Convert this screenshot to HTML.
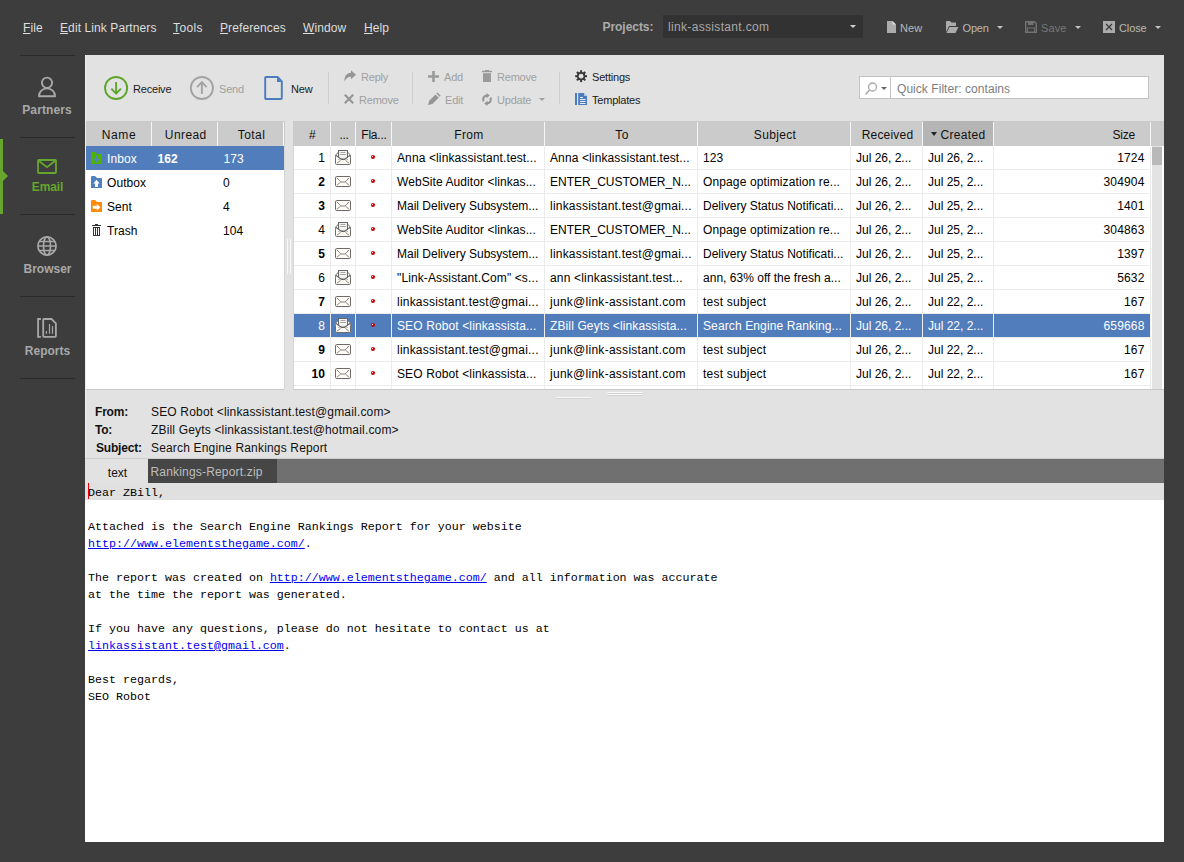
<!DOCTYPE html>
<html lang="en">
<head>
<meta charset="utf-8">
<title>LinkAssistant - Email</title>
<style>
*{box-sizing:border-box;margin:0;padding:0}
html,body{width:1184px;height:862px;overflow:hidden}
body{background:#3d3d3d;font-family:"Liberation Sans",Arial,sans-serif;font-size:12px;color:#000;position:relative;line-height:1}
.abs,.abs *{position:absolute}
span,div,i,u,svg{position:absolute;white-space:nowrap}
u{position:static}
a{color:#0000f0;text-decoration:underline}
/* top menu */
.menu span{top:21px;color:#dedede;font-size:12px;line-height:14px;letter-spacing:.1px}
.tb{color:#b9b9b9;font-size:11px;line-height:14px;top:21px;letter-spacing:.1px}
.tb.dis{color:#777}
.ar{top:26px;border:3px solid transparent;border-top:3px solid #c4c4c4;border-bottom:0;margin-left:-.5px}
/* sidebar */
.sep{left:20px;width:55px;height:1px;background:#2a2a2a}
.nav{left:0;width:95px;text-align:center;font-weight:bold;font-size:12px;color:#a8a8a8;line-height:14px;letter-spacing:0}
/* main */
#main{left:85px;top:55px;width:1079px;height:787px;background:#e2e2e2}
.tl{font-size:11px;line-height:14px;color:#1a1a1a;letter-spacing:-.2px}
.tl.dis{color:#a0a0a0}
.vsep{width:1px;height:32px;top:17px;background:#cfcfcf}
.hd{top:66px;height:25px;overflow:hidden;background:linear-gradient(#f6f6f6,#f6f6f6) right 1px/1px 100% no-repeat,#cbcbcb;font-size:12px;line-height:28px;letter-spacing:.33px;text-align:center;color:#111;padding-left:1px}
#folders{left:1px;top:91px;width:198px;height:243px;background:#fff}
#folders .f{left:0;width:198px;height:24px;overflow:hidden;font-size:12px;line-height:26px;letter-spacing:.08px}
#folders .f span{top:0}
#tbl{left:208px;top:91px;width:858px;height:243px;background:#fff;overflow:hidden}
.r{left:0;width:858px;height:24px;border-bottom:1px solid #ececec;font-size:12px;line-height:24px}
.r.sel{background:#527dbd;color:#fff}
.c{top:0;height:24px;border-right:1px solid #ececec;overflow:hidden;padding-left:5px;letter-spacing:.12px}
.sel .c{border-right-color:#eeeeee}
.c0{left:0;width:38px;text-align:right;padding-right:5px}
.c0.b{font-weight:bold}
.c1{left:38px;width:25px}
.c2{left:63px;width:36px}
.c3{left:99px;width:153px}
.c4{left:252px;width:153px}
.c5{left:405px;width:153px}
.c6{left:558px;width:72px}
.c7{left:630px;width:71px}
.c8{left:701px;width:157px;text-align:right;padding-right:5.500px;letter-spacing:.15px}
.c6,.c7{letter-spacing:0}
.env{left:4px;top:3px}
.dot{left:15px;top:9px;width:4px;height:4px;border-radius:2px;background:#c40808}
.dot:after{content:"";position:absolute;left:1px;top:1px;width:1px;height:1px;background:#ffd9d9}
.hl{font-weight:bold;font-size:12px;line-height:14px;color:#111;letter-spacing:-.2px}
.hv{font-size:12px;line-height:14px;color:#111;left:66px;letter-spacing:.17px}
pre{position:absolute;left:3px;top:430px;font-family:"Liberation Mono","Courier New",monospace;font-size:11.667px;line-height:17px;color:#000}
pre a{position:static}
</style>
</head>
<body>

<!-- top menu bar -->
<div class="menu" style="left:0;top:0;width:1184px;height:55px">
<span style="left:23px"><u>F</u>ile</span>
<span style="left:60px"><u>E</u>dit Link Partners</span>
<span style="left:173px;letter-spacing:.4px"><u>T</u>ools</span>
<span style="left:220px"><u>P</u>references</span>
<span style="left:303px"><u>W</u>indow</span>
<span style="left:364px"><u>H</u>elp</span>
</div>
<span style="left:602.500px;top:20px;font-weight:bold;font-size:12px;line-height:14px;color:#ababab;letter-spacing:-.05px">Projects:</span>
<div style="left:663px;top:15px;width:200px;height:23px;background:#323232"></div>
<span style="left:668px;top:20px;font-size:12px;line-height:14px;color:#a9a9a9;letter-spacing:.33px">link-assistant.com</span>
<i style="left:850px;top:25px;border:3px solid transparent;border-top:3px solid #d0d0d0;border-bottom:0"></i>

<svg style="left:887px;top:21px" width="9" height="12" viewBox="0 0 9 12"><path d="M0 0H5.500L9 3.500V12H0Z" fill="#ababab"/><path d="M5.500 0V3.500H9Z" fill="#dcdcdc"/></svg>
<span class="tb" style="left:900px">New</span>
<svg style="left:946px;top:21px" width="13" height="12" viewBox="0 0 13 12"><path d="M0 11V1Q0 0 1 0H4L5.500 1.500H9.500Q10 1.500 10 2V5H3L0 11Z" fill="#ababab"/><path d="M3.500 6H12.500L9.500 12H0.500Z" fill="#ababab"/></svg>
<span class="tb" style="left:962.500px;letter-spacing:-.15px">Open</span>
<i class="ar" style="left:997px"></i>
<svg style="left:1025px;top:21px" width="12" height="12" viewBox="0 0 12 12"><path d="M0.700 0.700H9.500L11.300 2.500V11.300H0.700Z" fill="none" stroke="#727272" stroke-width="1.4"/><rect x="3" y="0.500" width="5.500" height="3.500" fill="#727272"/><rect x="2.500" y="7" width="7" height="4.500" fill="none" stroke="#727272"/></svg>
<span class="tb dis" style="left:1041px">Save</span>
<i class="ar" style="left:1075px"></i>
<svg style="left:1103px;top:21px" width="12" height="12" viewBox="0 0 12 12"><rect width="12" height="12" fill="#ababab"/><path d="M3 3L9 9M9 3L3 9" stroke="#3d3d3d" stroke-width="1.3"/></svg>
<span class="tb" style="left:1119px;letter-spacing:-.1px">Close</span>
<i class="ar" style="left:1155px"></i>

<!-- sidebar -->
<div class="sep" style="top:55px"></div>
<div class="sep" style="top:137px"></div>
<div class="sep" style="top:214px"></div>
<div class="sep" style="top:296px"></div>
<div class="sep" style="top:378px"></div>
<div style="left:0;top:139px;width:3px;height:75px;background:#66a62e"></div>
<i style="left:3px;top:171px;border:5px solid transparent;border-left:5px solid #66a62e;border-right:0"></i>

<svg style="left:37px;top:76px" width="20" height="22" viewBox="0 0 20 22"><circle cx="10" cy="6.750" r="5.100" fill="none" stroke="#a8a8a8" stroke-width="1.900"/><path d="M1.900 20.200A8.100 7.800 0 0 1 18.100 20.200Z" fill="none" stroke="#a8a8a8" stroke-width="1.900" stroke-linejoin="round"/></svg>
<span class="nav" style="top:103px;letter-spacing:.1px;width:94px">Partners</span>
<svg style="left:37px;top:159px" width="20" height="15" viewBox="0 0 20 15"><rect x="1" y="1" width="18" height="13" rx="0.800" fill="none" stroke="#66a62e" stroke-width="1.800"/><path d="M2 2L10 8.200L18 2" fill="none" stroke="#66a62e" stroke-width="1.800"/></svg>
<span class="nav" style="top:180px;color:#66a62e;letter-spacing:-.15px">Email</span>
<svg style="left:37px;top:236px" width="20" height="20" viewBox="0 0 20 20"><g fill="none" stroke="#a8a8a8" stroke-width="1.700"><circle cx="10" cy="10" r="9.100"/><ellipse cx="10" cy="10" rx="3.500" ry="9.100"/><path d="M1 10H19M2.500 5.500H17.500M2.500 14.500H17.500"/></g></svg>
<span class="nav" style="top:262px">Browser</span>
<svg style="left:37px;top:317px" width="21" height="22" viewBox="0 0 21 22"><g fill="none" stroke="#a8a8a8" stroke-width="1.800"><path d="M3.900 2H1.100V19.900H3.900"/><path d="M6.200 2.800Q6.200 2 7 2H14.500L18.900 6.400V19.100Q18.900 19.900 18.100 19.900H7Q6.200 19.900 6.200 19.100Z"/><path d="M9.400 16.800V13.900M12.500 16.800V6.900M15.500 16.800V8.900" stroke-width="1.200"/></g></svg>
<span class="nav" style="top:344px">Reports</span>

<!-- main panel -->
<div id="main">
  <div style="left:0;top:0;width:1px;height:428px;background:#eeeeee"></div>
  <!-- toolbar -->
  <svg style="left:18px;top:20px" width="26" height="26" viewBox="0 0 26 26"><circle cx="13.100" cy="13" r="11.050" fill="none" stroke="#5ea62b" stroke-width="1.900"/><path d="M13.100 7V18.500M8.300 13.700L13.100 18.700L17.900 13.700" fill="none" stroke="#5ea62b" stroke-width="1.900"/></svg>
  <span class="tl" style="left:48px;top:27px">Receive</span>
  <svg style="left:104px;top:20px" width="26" height="26" viewBox="0 0 26 26"><circle cx="12.900" cy="13" r="11.050" fill="none" stroke="#a3a3a3" stroke-width="1.900"/><path d="M12.900 19V7.500M8.100 12.200L12.900 7.200L17.700 12.200" fill="none" stroke="#a3a3a3" stroke-width="1.900"/></svg>
  <span class="tl dis" style="left:134px;top:27px">Send</span>
  <svg style="left:179px;top:21px" width="19" height="24" viewBox="0 0 19 24"><path d="M1.200 2Q1.200 1 2.200 1H13.500L17.800 5.300V22Q17.800 23 16.800 23H2.200Q1.200 23 1.200 22Z" fill="none" stroke="#4a7cc0" stroke-width="1.900" stroke-linejoin="round"/><path d="M13 1.500V6H17.500Z" fill="#4a7cc0"/></svg>
  <span class="tl" style="left:206px;top:27px">New</span>
  <div class="vsep" style="left:243px"></div>
  <svg style="left:259px;top:15px" width="12" height="12" viewBox="0 0 12 12"><path d="M7 0.300L12 4.800L7 9.300V6.800C4.300 6.800 2.200 8 0.500 11.300C0 6.500 2.800 2.900 7 2.700Z" fill="#959595"/></svg>
  <span class="tl dis" style="left:276px;top:15px">Reply</span>
  <svg style="left:259px;top:39px" width="10" height="10" viewBox="0 0 10 10"><path d="M0.800 0.800L9.200 9.200M9.200 0.800L0.800 9.200" stroke="#959595" stroke-width="2.100"/></svg>
  <span class="tl dis" style="left:274px;top:38px">Remove</span>
  <div class="vsep" style="left:327px"></div>
  <svg style="left:343px;top:16px" width="11" height="11" viewBox="0 0 11 11"><path d="M5.500 0V11M0 5.500H11" stroke="#9a9a9a" stroke-width="2.6"/></svg>
  <span class="tl dis" style="left:359px;top:15px">Add</span>
  <svg style="left:342px;top:37px" width="14" height="14" viewBox="0 0 14 14"><path d="M1 13L2.200 8.800L8.500 2.500L11.700 5.700L5.400 12Z" fill="#959595"/><path d="M9.400 1.600L10.500 0.600L13.700 3.800L12.600 4.800Z" fill="#959595"/></svg>
  <span class="tl dis" style="left:360px;top:38px">Edit</span>
  <svg style="left:397px;top:15px" width="10" height="12" viewBox="0 0 10 12"><path d="M0 1.500H10M3 0.500H7" stroke="#9a9a9a" stroke-width="1.4"/><rect x="1" y="3.200" width="8" height="8.800" fill="#9a9a9a"/></svg>
  <span class="tl dis" style="left:412px;top:15px">Remove</span>
  <svg style="left:396px;top:38px" width="12" height="13" viewBox="0 0 12 13"><path d="M6 2.600A3.900 3.900 0 0 0 2.600 8.400M6 10.400A3.900 3.900 0 0 0 9.400 4.600" fill="none" stroke="#959595" stroke-width="2.200"/><path d="M5.500 0L8.800 2.600L5.500 5.200ZM6.500 7.800L3.200 10.400L6.500 13Z" fill="#959595"/></svg>
  <span class="tl dis" style="left:412px;top:38px">Update</span>
  <i style="left:454px;top:43px;border:3px solid transparent;border-top:3px solid #a0a0a0;border-bottom:0"></i>
  <div class="vsep" style="left:474px"></div>
  <svg style="left:490px;top:15px" width="13" height="13" viewBox="0 0 13 13"><g transform="translate(6.100 6.200)"><g fill="#363636"><rect x="-1" y="-5.900" width="2" height="11.800"/><rect x="-1" y="-5.900" width="2" height="11.800" transform="rotate(45)"/><rect x="-1" y="-5.900" width="2" height="11.800" transform="rotate(90)"/><rect x="-1" y="-5.900" width="2" height="11.800" transform="rotate(135)"/></g><circle r="4.100" fill="#363636"/><circle r="2.400" fill="#e2e2e2"/></g></svg>
  <span class="tl" style="left:507px;top:15px">Settings</span>
  <svg style="left:490px;top:38px" width="12" height="12" viewBox="0 0 12 12"><rect x="0" y="0" width="2" height="12" fill="#4a7cc0"/><path d="M3.200 0H8.800L12 3.200V12H3.200Z" fill="#4a7cc0"/><path d="M9 0.200V3H11.800Z" fill="#b4c8e6"/><path d="M5 4.500H8M5 6.500H10.500M5 8.500H10.500M5 10.500H10.500" stroke="#e8eef8" stroke-width="1"/></svg>
  <span class="tl" style="left:507px;top:38px">Templates</span>

  <div style="left:774px;top:21px;width:290px;height:23px;background:#fff;border:1px solid #c3c3c3"></div>
  <div style="left:805px;top:22px;width:1px;height:21px;background:#c3c3c3"></div>
  <svg style="left:780px;top:27px" width="13" height="13" viewBox="0 0 13 13"><circle cx="7.500" cy="5" r="4" fill="none" stroke="#a8a8a8" stroke-width="1.3"/><path d="M4.500 8L0.500 12.500" stroke="#a8a8a8" stroke-width="1.5"/></svg>
  <i style="left:796px;top:32px;border:3px solid transparent;border-top:3px solid #666;border-bottom:0"></i>
  <span style="left:812px;top:27px;font-size:12px;line-height:14px;color:#7d7d7d;letter-spacing:.05px">Quick Filter: contains</span>

  <!-- folder table -->
  <div class="hd" style="left:1px;width:66px;padding-left:0;letter-spacing:.6px">Name</div>
  <div class="hd" style="left:67px;width:66px;padding-left:1.500px;letter-spacing:.42px">Unread</div>
  <div class="hd" style="left:133px;width:66px;padding-left:1px;letter-spacing:.44px">Total</div>
  <div style="left:199px;top:66px;width:1px;height:25px;background:#cbcbcb"></div>
  <div id="folders">
    <div class="f" style="top:0;background:#527dbd;color:#fff">
      <svg style="left:5px;top:6px" width="11" height="12" viewBox="0 0 11 12"><path d="M0 1Q0 0 1 0H4L6 2H10.500Q11 2 11 2.500V12H0Z" fill="#4bb400"/><path d="M4 3.200H7V7H8.700L5.500 10.700L2.300 7H4Z" fill="#5783c6"/></svg>
      <span style="left:21px">Inbox</span><span style="left:71.500px;font-weight:bold">162</span><span style="left:137.500px">173</span>
    </div>
    <div class="f" style="top:24px">
      <svg style="left:5px;top:6px" width="11" height="12" viewBox="0 0 11 12"><path d="M0 1Q0 0 1 0H4L6 2H10.500Q11 2 11 2.500V12H0Z" fill="#5080c0"/><path d="M4 11H7V7.500H8.700L5.500 3.800L2.300 7.500H4Z" fill="#fff"/></svg>
      <span style="left:21px">Outbox</span><span style="left:137px">0</span>
    </div>
    <div class="f" style="top:48px">
      <svg style="left:5px;top:6px" width="11" height="12" viewBox="0 0 11 12"><path d="M0 1Q0 0 1 0H4L6 2H10.500Q11 2 11 2.500V12H0Z" fill="#ff8a0c"/><path d="M1.800 5.700H5.800V4L9.500 7.200L5.800 10.400V8.700H1.800Z" fill="#fff"/></svg>
      <span style="left:21px">Sent</span><span style="left:137px">4</span>
    </div>
    <div class="f" style="top:72px">
      <svg style="left:6px;top:6px" width="9" height="12" viewBox="0 0 9 12" shape-rendering="crispEdges"><rect x="3" y="0" width="3" height="1" fill="#333"/><rect x="0" y="1" width="9" height="1" fill="#333"/><path d="M1.500 3V11.500H7.500V3" fill="none" stroke="#333" stroke-width="1"/><path d="M3.500 3V11M5.500 3V11" stroke="#333" stroke-width="1"/><rect x="1" y="3" width="7" height="1" fill="#333"/></svg>
      <span style="left:21px">Trash</span><span style="left:137px">104</span>
    </div>
  </div>
  <!-- splitter -->
  <div style="left:202px;top:184px;width:1px;height:35px;background:#f8f8f8"></div>
  <div style="left:205px;top:184px;width:1px;height:35px;background:#f8f8f8"></div>

  <!-- message table -->
  <div class="hd" style="left:208px;width:38px">#</div>
  <div class="hd" style="left:246px;width:25px;letter-spacing:-.3px">...</div>
  <div class="hd" style="left:271px;width:36px;letter-spacing:-.2px;padding-left:0">Fla...</div>
  <div class="hd" style="left:307px;width:153px">From</div>
  <div class="hd" style="left:460px;width:153px">To</div>
  <div class="hd" style="left:613px;width:153px">Subject</div>
  <div class="hd" style="left:766px;width:72px;letter-spacing:.2px">Received</div>
  <div class="hd" style="left:838px;width:71px;background:linear-gradient(#f6f6f6,#f6f6f6) right 1px/1px 100% no-repeat,#b5b5b5;padding-left:9px">Created<i style="left:8px;top:11px;border:3px solid transparent;border-top:4px solid #222;border-bottom:0"></i></div>
  <div class="hd" style="left:909px;width:157px;text-align:right;padding-right:16px;letter-spacing:-.2px">Size</div>
  <div class="hd" style="left:1066px;width:13px;background:#cbcbcb"></div>
  <div id="tbl">
<div class="r" style="top:0px"><span class="c c0">1</span><span class="c c1"><svg class="env" width="16" height="16" viewBox="0 0 16 16"><path d="M0.500 6L3.500 3.200H12.500L15.500 6V14.500Q15.500 15.500 14.500 15.500H1.500Q0.500 15.500 0.500 14.500Z" fill="#fffaf3" stroke="#6c6c6c"/><rect x="3.500" y="1.500" width="9" height="8.500" fill="#f3f3f3" stroke="#666"/><path d="M5.500 3.500H10.500M5 5.500H11" stroke="#a8a8a8"/><path d="M0.800 6.300L6 10.300Q8 11.600 10 10.300L15.200 6.300V9L10 11H6L0.800 9Z" fill="#fff" stroke="none"/><path d="M0.800 6.300L6.500 10.500H9.500L15.200 6.300" fill="none" stroke="#666" stroke-width="1.1"/><path d="M5.500 11.500L1.800 14.300M10.500 11.500L14.200 14.300" fill="none" stroke="#7a7a7a" stroke-width="0.9"/></svg></span><span class="c c2"><i class="dot"></i></span><span class="c c3">Anna &lt;linkassistant.test...</span><span class="c c4">Anna &lt;linkassistant.test...</span><span class="c c5">123</span><span class="c c6">Jul 26, 2...</span><span class="c c7">Jul 26, 2...</span><span class="c c8">1724</span></div>
<div class="r" style="top:24px"><span class="c c0 b">2</span><span class="c c1"><svg class="env" width="16" height="16" viewBox="0 0 16 16"><rect x="0.5" y="3.500" width="15" height="10" rx="1.2" fill="#fffaf3" stroke="#6c6c6c"/><path d="M1.8 4.800L5.800 8.800L1.800 12.300M14.200 4.800L10.200 8.800L14.200 12.300" fill="none" stroke="#7a7a7a" stroke-width="0.9"/><path d="M6 9H10" stroke="#666" stroke-width="0.8"/></svg></span><span class="c c2"><i class="dot"></i></span><span class="c c3" style="letter-spacing:0.08px">WebSite Auditor &lt;linkas...</span><span class="c c4" style="letter-spacing:-0.02px">ENTER_CUSTOMER_N...</span><span class="c c5">Onpage optimization re...</span><span class="c c6">Jul 26, 2...</span><span class="c c7">Jul 25, 2...</span><span class="c c8">304904</span></div>
<div class="r" style="top:48px"><span class="c c0 b">3</span><span class="c c1"><svg class="env" width="16" height="16" viewBox="0 0 16 16"><rect x="0.5" y="3.500" width="15" height="10" rx="1.2" fill="#fffaf3" stroke="#6c6c6c"/><path d="M1.8 4.800L5.800 8.800L1.800 12.300M14.200 4.800L10.200 8.800L14.200 12.300" fill="none" stroke="#7a7a7a" stroke-width="0.9"/><path d="M6 9H10" stroke="#666" stroke-width="0.8"/></svg></span><span class="c c2"><i class="dot"></i></span><span class="c c3" style="letter-spacing:0px">Mail Delivery Subsystem...</span><span class="c c4" style="letter-spacing:0.21px">linkassistant.test@gmai...</span><span class="c c5" style="letter-spacing:0.01px">Delivery Status Notificati...</span><span class="c c6">Jul 26, 2...</span><span class="c c7">Jul 25, 2...</span><span class="c c8">1401</span></div>
<div class="r" style="top:72px"><span class="c c0">4</span><span class="c c1"><svg class="env" width="16" height="16" viewBox="0 0 16 16"><path d="M0.500 6L3.500 3.200H12.500L15.500 6V14.500Q15.500 15.500 14.500 15.500H1.500Q0.500 15.500 0.500 14.500Z" fill="#fffaf3" stroke="#6c6c6c"/><rect x="3.500" y="1.500" width="9" height="8.500" fill="#f3f3f3" stroke="#666"/><path d="M5.500 3.500H10.500M5 5.500H11" stroke="#a8a8a8"/><path d="M0.800 6.300L6 10.300Q8 11.600 10 10.300L15.200 6.300V9L10 11H6L0.800 9Z" fill="#fff" stroke="none"/><path d="M0.800 6.300L6.500 10.500H9.500L15.200 6.300" fill="none" stroke="#666" stroke-width="1.1"/><path d="M5.500 11.500L1.800 14.300M10.500 11.500L14.200 14.300" fill="none" stroke="#7a7a7a" stroke-width="0.9"/></svg></span><span class="c c2"><i class="dot"></i></span><span class="c c3" style="letter-spacing:0.08px">WebSite Auditor &lt;linkas...</span><span class="c c4" style="letter-spacing:-0.02px">ENTER_CUSTOMER_N...</span><span class="c c5">Onpage optimization re...</span><span class="c c6">Jul 26, 2...</span><span class="c c7">Jul 25, 2...</span><span class="c c8">304863</span></div>
<div class="r" style="top:96px"><span class="c c0 b">5</span><span class="c c1"><svg class="env" width="16" height="16" viewBox="0 0 16 16"><rect x="0.5" y="3.500" width="15" height="10" rx="1.2" fill="#fffaf3" stroke="#6c6c6c"/><path d="M1.8 4.800L5.800 8.800L1.800 12.300M14.200 4.800L10.200 8.800L14.200 12.300" fill="none" stroke="#7a7a7a" stroke-width="0.9"/><path d="M6 9H10" stroke="#666" stroke-width="0.8"/></svg></span><span class="c c2"><i class="dot"></i></span><span class="c c3" style="letter-spacing:0px">Mail Delivery Subsystem...</span><span class="c c4" style="letter-spacing:0.21px">linkassistant.test@gmai...</span><span class="c c5" style="letter-spacing:0.01px">Delivery Status Notificati...</span><span class="c c6">Jul 26, 2...</span><span class="c c7">Jul 25, 2...</span><span class="c c8">1397</span></div>
<div class="r" style="top:120px"><span class="c c0">6</span><span class="c c1"><svg class="env" width="16" height="16" viewBox="0 0 16 16"><path d="M0.500 6L3.500 3.200H12.500L15.500 6V14.500Q15.500 15.500 14.500 15.500H1.500Q0.500 15.500 0.500 14.500Z" fill="#fffaf3" stroke="#6c6c6c"/><rect x="3.500" y="1.500" width="9" height="8.500" fill="#f3f3f3" stroke="#666"/><path d="M5.500 3.500H10.500M5 5.500H11" stroke="#a8a8a8"/><path d="M0.800 6.300L6 10.300Q8 11.600 10 10.300L15.200 6.300V9L10 11H6L0.800 9Z" fill="#fff" stroke="none"/><path d="M0.800 6.300L6.500 10.500H9.500L15.200 6.300" fill="none" stroke="#666" stroke-width="1.1"/><path d="M5.500 11.500L1.800 14.300M10.500 11.500L14.200 14.300" fill="none" stroke="#7a7a7a" stroke-width="0.9"/></svg></span><span class="c c2"><i class="dot"></i></span><span class="c c3">"Link-Assistant.Com" &lt;s...</span><span class="c c4" style="letter-spacing:0.17px">ann &lt;linkassistant.test...</span><span class="c c5" style="letter-spacing:0.02px">ann, 63% off the fresh a...</span><span class="c c6">Jul 26, 2...</span><span class="c c7">Jul 25, 2...</span><span class="c c8">5632</span></div>
<div class="r" style="top:144px"><span class="c c0 b">7</span><span class="c c1"><svg class="env" width="16" height="16" viewBox="0 0 16 16"><rect x="0.5" y="3.500" width="15" height="10" rx="1.2" fill="#fffaf3" stroke="#6c6c6c"/><path d="M1.8 4.800L5.800 8.800L1.800 12.300M14.200 4.800L10.200 8.800L14.200 12.300" fill="none" stroke="#7a7a7a" stroke-width="0.9"/><path d="M6 9H10" stroke="#666" stroke-width="0.8"/></svg></span><span class="c c2"><i class="dot"></i></span><span class="c c3" style="letter-spacing:0.21px">linkassistant.test@gmai...</span><span class="c c4" style="letter-spacing:0.27px">junk@link-assistant.com</span><span class="c c5" style="letter-spacing:0.22px">test subject</span><span class="c c6">Jul 26, 2...</span><span class="c c7">Jul 22, 2...</span><span class="c c8">167</span></div>
<div class="r sel" style="top:168px"><span class="c c0">8</span><span class="c c1"><svg class="env" width="16" height="16" viewBox="0 0 16 16"><path d="M0.500 6L3.500 3.200H12.500L15.500 6V14.500Q15.500 15.500 14.500 15.500H1.500Q0.500 15.500 0.500 14.500Z" fill="#fffaf3" stroke="#6c6c6c"/><rect x="3.500" y="1.500" width="9" height="8.500" fill="#f3f3f3" stroke="#666"/><path d="M5.500 3.500H10.500M5 5.500H11" stroke="#a8a8a8"/><path d="M0.800 6.300L6 10.300Q8 11.600 10 10.300L15.200 6.300V9L10 11H6L0.800 9Z" fill="#fff" stroke="none"/><path d="M0.800 6.300L6.500 10.500H9.500L15.200 6.300" fill="none" stroke="#666" stroke-width="1.1"/><path d="M5.500 11.500L1.800 14.300M10.500 11.500L14.200 14.300" fill="none" stroke="#7a7a7a" stroke-width="0.9"/></svg></span><span class="c c2"><i class="dot"></i></span><span class="c c3">SEO Robot &lt;linkassista...</span><span class="c c4">ZBill Geyts &lt;linkassista...</span><span class="c c5">Search Engine Ranking...</span><span class="c c6">Jul 26, 2...</span><span class="c c7">Jul 22, 2...</span><span class="c c8">659668</span></div>
<div class="r" style="top:192px"><span class="c c0 b">9</span><span class="c c1"><svg class="env" width="16" height="16" viewBox="0 0 16 16"><rect x="0.5" y="3.500" width="15" height="10" rx="1.2" fill="#fffaf3" stroke="#6c6c6c"/><path d="M1.8 4.800L5.800 8.800L1.800 12.300M14.200 4.800L10.200 8.800L14.200 12.300" fill="none" stroke="#7a7a7a" stroke-width="0.9"/><path d="M6 9H10" stroke="#666" stroke-width="0.8"/></svg></span><span class="c c2"><i class="dot"></i></span><span class="c c3" style="letter-spacing:0.21px">linkassistant.test@gmai...</span><span class="c c4" style="letter-spacing:0.27px">junk@link-assistant.com</span><span class="c c5" style="letter-spacing:0.22px">test subject</span><span class="c c6">Jul 26, 2...</span><span class="c c7">Jul 22, 2...</span><span class="c c8">167</span></div>
<div class="r" style="top:216px"><span class="c c0 b">10</span><span class="c c1"><svg class="env" width="16" height="16" viewBox="0 0 16 16"><rect x="0.5" y="3.500" width="15" height="10" rx="1.2" fill="#fffaf3" stroke="#6c6c6c"/><path d="M1.8 4.800L5.800 8.800L1.800 12.300M14.200 4.800L10.200 8.800L14.200 12.300" fill="none" stroke="#7a7a7a" stroke-width="0.9"/><path d="M6 9H10" stroke="#666" stroke-width="0.8"/></svg></span><span class="c c2"><i class="dot"></i></span><span class="c c3">SEO Robot &lt;linkassista...</span><span class="c c4" style="letter-spacing:0.27px">junk@link-assistant.com</span><span class="c c5" style="letter-spacing:0.22px">test subject</span><span class="c c6">Jul 26, 2...</span><span class="c c7">Jul 22, 2...</span><span class="c c8">167</span></div>
<div class="r" style="top:240px"><span class="c c0"></span><span class="c c1"></span><span class="c c2"></span><span class="c c3"></span><span class="c c4"></span><span class="c c5"></span><span class="c c6"></span><span class="c c7"></span><span class="c c8"></span></div>
  </div>
  <div style="left:1066px;top:91px;width:13px;height:243px;background:#fff"></div>
  <div style="left:1067px;top:91px;width:10px;height:243px;background:#e3e3e3"></div>
  <div style="left:1067px;top:92px;width:10px;height:18px;background:#b9b9b9"></div>

  <!-- table borders -->
  <div style="left:1px;top:334px;width:199px;height:1px;background:#c9c9c9"></div>
  <div style="left:199px;top:91px;width:1px;height:244px;background:#d6d6d6"></div>
  <div style="left:208px;top:334px;width:871px;height:1px;background:#c9c9c9"></div>
  <div style="left:208px;top:91px;width:1px;height:244px;background:#d6d6d6"></div>
  <!-- splitter handles -->
  <div style="left:471px;top:342px;width:35px;height:2px;background:linear-gradient(#f8f8f8 50%,#d2d2d2 50%)"></div>
  <div style="left:522px;top:337px;width:35px;height:4px;background:linear-gradient(#f8f8f8 25%,#d2d2d2 25%,#d2d2d2 50%,#f8f8f8 50%,#f8f8f8 75%,#d2d2d2 75%)"></div>

  <!-- message header -->
  <span class="hl" style="left:10px;top:350px">From:</span><span class="hv" style="top:350px">SEO Robot &lt;linkassistant.test@gmail.com&gt;</span>
  <span class="hl" style="left:10px;top:368px">To:</span><span class="hv" style="top:368px">ZBill Geyts &lt;linkassistant.test@hotmail.com&gt;</span>
  <span class="hl" style="left:11px;top:386px">Subject:</span><span class="hv" style="top:386px">Search Engine Rankings Report</span>

  <!-- tabs -->
  <div style="left:0;top:403px;width:1079px;height:1px;background:#cdcdcd"></div>
  <div style="left:0;top:404px;width:1079px;height:24px;background:#707070"></div>
  <div style="left:0;top:404px;width:63px;height:24px;background:#e2e2e2;text-align:center;font-size:12px;line-height:28px;color:#111;padding-left:2px">text</div>
  <div style="left:63px;top:404px;width:129px;height:24px;background:#464646;font-size:12px;line-height:27px;color:#bdbdbd;padding-left:2.500px;letter-spacing:.18px">Rankings-Report.zip</div>

  <!-- body -->
  <div style="left:0;top:428px;width:1079px;height:359px;background:#fff"></div>
  <div style="left:0;top:428px;width:1079px;height:17px;background:#e0e0e0"></div>
  <div style="left:3px;top:428px;width:1px;height:16px;background:#f00000"></div>
<pre>Dear ZBill,

Attached is the Search Engine Rankings Report for your website
<a>http://www.elementsthegame.com/</a>.

The report was created on <a>http://www.elementsthegame.com/</a> and all information was accurate
at the time the report was generated.

If you have any questions, please do not hesitate to contact us at
<a>linkassistant.test@gmail.com</a>.

Best regards,
SEO Robot</pre>
</div>
</body>
</html>
